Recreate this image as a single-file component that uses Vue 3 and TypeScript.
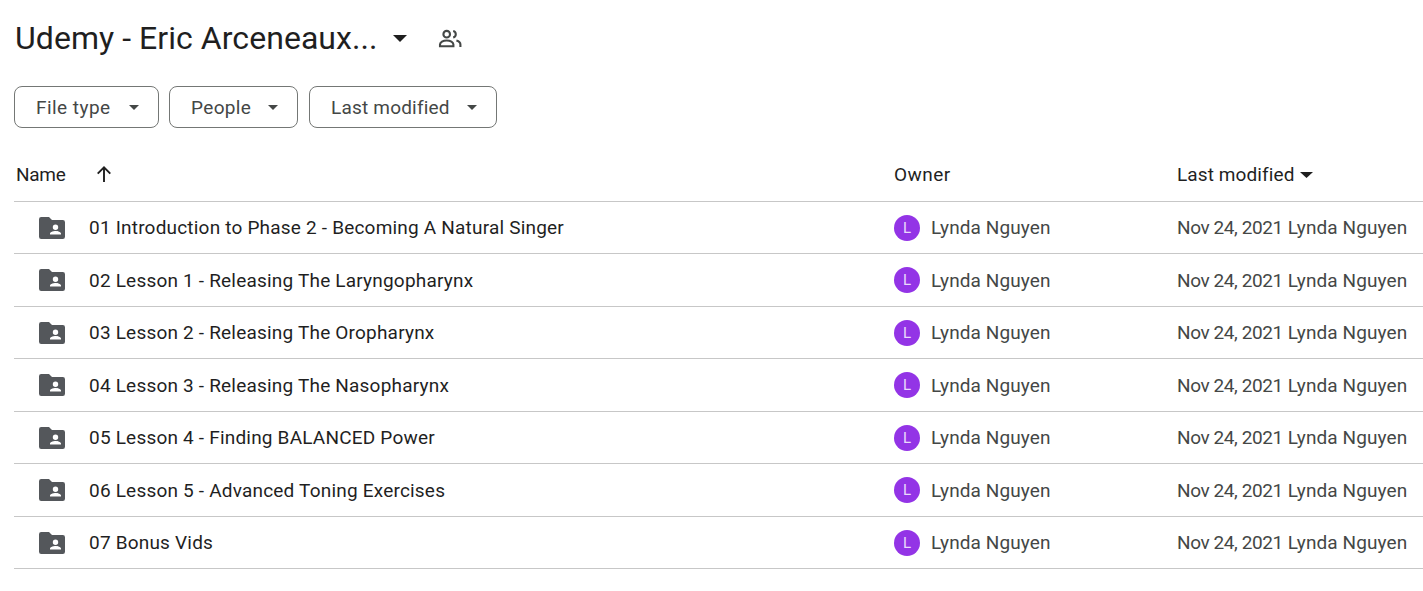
<script setup lang="ts">
const filters = ['File type', 'People', 'Last modified']
const rows = [
  '01 Introduction to Phase 2 - Becoming A Natural Singer',
  '02 Lesson 1 - Releasing The Laryngopharynx',
  '03 Lesson 2 - Releasing The Oropharynx',
  '04 Lesson 3 - Releasing The Nasopharynx',
  '05 Lesson 4 - Finding BALANCED Power',
  '06 Lesson 5 - Advanced Toning Exercises',
  '07 Bonus Vids',
]
</script>

<template>
  <div class="page">
    <header class="title-row">
      <h1 class="title">Udemy - Eric Arceneaux...</h1>
      <svg class="title-caret" width="14" height="7" viewBox="0 0 14 7"><path d="M0 0h14L7 7z" /></svg>
      <svg class="people" width="24" height="24" viewBox="0 0 24 24">
        <circle cx="8.7" cy="7.2" r="3.3" />
        <path d="M2 19.2v-1.700c0-2.200 3-4 6.700-4s6.700 1.800 6.700 4v1.700z" />
        <path d="M15.200 3.900a3.400 3.400 0 0 1 0 6.600" />
        <path d="M18.400 13.600c2 .6 4 1.900 4 4v2.400" />
      </svg>
    </header>

    <div class="filters">
      <button v-for="f in filters" :key="f" class="chip">
        <span>{{ f }}</span>
        <svg width="10" height="5" viewBox="0 0 10 5"><path d="M0 0h10L5 5z" /></svg>
      </button>
    </div>

    <div class="table">
      <div class="row head">
        <div class="cell name-head">
          <span>Name</span>
          <svg class="arrow" width="18" height="18" viewBox="0 0 18 18"><path d="M9 17V2.400M2.700 8.700 9 2.400l6.300 6.300" /></svg>
        </div>
        <div class="cell owner-head">Owner</div>
        <div class="cell">
          <span>Last modified</span>
          <svg class="sort-caret" width="13" height="6" viewBox="0 0 13 6"><path d="M0 0h13L6.500 6z" /></svg>
        </div>
      </div>
      <div v-for="r in rows" :key="r" class="row item">
        <div class="cell name">
          <svg class="folder" width="26" height="22" viewBox="0 0 26 22">
            <path fill-rule="evenodd" d="M2.200 0H10l3 3h10.800A2.200 2.200 0 0 1 26 5.200v14.600a2.200 2.200 0 0 1-2.200 2.200H2.200A2.200 2.200 0 0 1 0 19.800v-17.600A2.200 2.200 0 0 1 2.200 0zM16.500 7.500a2.700 2.700 0 1 0 0 5.400 2.700 2.700 0 0 0 0-5.400zM11 17.500h11v-1c0-1.700-3.600-2.600-5.500-2.600S11 14.800 11 16.500z" />
          </svg>
          <span>{{ r }}</span>
        </div>
        <div class="cell owner">
          <span class="avatar">L</span>
          <span>Lynda Nguyen</span>
        </div>
        <div class="cell date"><span><span class="day">Nov 24, 2021</span> Lynda Nguyen</span></div>
      </div>
    </div>
  </div>
</template>

<style>
html, body { background: #fff; }
</style>

<style scoped>
.page {
  width: 1423px;
  height: 591px;
  overflow: hidden;
  box-sizing: border-box;
  padding: 16px 0 0 14px;
  background: #fff;
  font-family: Roboto, "Liberation Sans", sans-serif;
  color: #1f1f1f;
}
.title-row {
  display: flex;
  align-items: center;
  height: 44px;
}
.title {
  margin: 0 0 0 1px;
  font-size: 32px;
  font-weight: 400;
  line-height: 44px;
  white-space: nowrap;
  width: 378px;
  letter-spacing: 0.05px;
}
.title-caret { margin-top: 1px; }
.title-caret path { fill: #1f1f1f; }
.people { margin-left: 31px; margin-top: 1px; fill: none; stroke: #444746; stroke-width: 2.1; }
.filters {
  display: flex;
  gap: 10px;
  margin-top: 26px;
}
.chip {
  display: flex;
  align-items: center;
  justify-content: space-between;
  width: 145px;
  height: 42px;
  box-sizing: border-box;
  padding: 1px 19px 0 21px;
  border: 1px solid #747775;
  border-radius: 8px;
  background: #fff;
  color: #444746;
  font: 19px Roboto, sans-serif;
  letter-spacing: 0.2px;
}
.chip:nth-child(1) { letter-spacing: 0.45px; }
.chip:nth-child(2) { width: 129px; letter-spacing: 0.35px; }
.chip:nth-child(3) { width: 188px; margin-left: 1px; }
.chip svg { fill: #444746; }
.table { margin-top: 20px; }
.row {
  display: grid;
  grid-template-columns: 880px 283px 1fr;
  border-bottom: 1px solid #c7c7c7;
  box-sizing: border-box;
  height: 52.5px;
}
.head { height: 53.5px; }
.cell {
  display: flex;
  align-items: center;
  white-space: nowrap;
  font-size: 19px;
  letter-spacing: 0.1px;
}
.item .cell { padding-top: 1px; }
.name-head { padding-left: 2px; letter-spacing: -0.3px; }
.owner-head { letter-spacing: 0.45px; }
.arrow { margin-left: 30px; fill: none; stroke: #1f1f1f; stroke-width: 1.9; }
.sort-caret { margin-left: 6px; margin-top: 2px; }
.sort-caret path { fill: #1f1f1f; }
.item .name { padding-left: 25px; letter-spacing: 0.2px; }
.folder { fill: #54575b; margin-right: 24px; flex: none; }
.owner, .date { color: #444746; }
.day { letter-spacing: -0.4px; }
.avatar {
  width: 26px;
  height: 26px;
  border-radius: 50%;
  background: #9334e6;
  color: #ead9fb;
  font-size: 15px;
  display: flex;
  align-items: center;
  justify-content: center;
  margin-right: 11px;
}
</style>
